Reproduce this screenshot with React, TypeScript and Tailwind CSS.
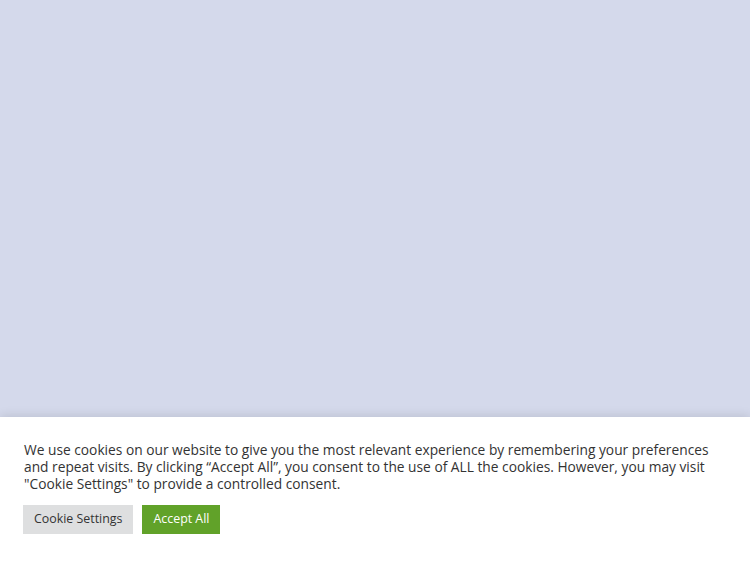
export default function App() {
  return (
    <div className="flex h-[563px] w-[750px] flex-col bg-[#d4d9eb]" style={{ fontFamily: '"Open Sans", sans-serif' }}>
      <div className="flex-1" />
      <div className="h-[146px] bg-white px-6 pt-[24px] shadow-[0_-1px_10px_rgba(0,0,0,0.12)]">
        <p className="text-[13.75px] leading-[17px] text-[#333333]">
          We use cookies on our website to give you the most relevant experience by remembering your preferences and repeat visits. By clicking “Accept All”, you consent to the use of ALL the cookies. However, you may visit "Cookie Settings" to provide a controlled consent.
        </p>
        <div className="-ml-px mt-[13px] flex gap-[9px]">
          <button className="h-[29px] bg-[#dedfe0] px-[11px] text-[12.4px] text-[#333333]">Cookie Settings</button>
          <button className="h-[29px] bg-[#61a229] px-[11px] text-[12.4px] text-white">Accept All</button>
        </div>
      </div>
    </div>
  );
}
